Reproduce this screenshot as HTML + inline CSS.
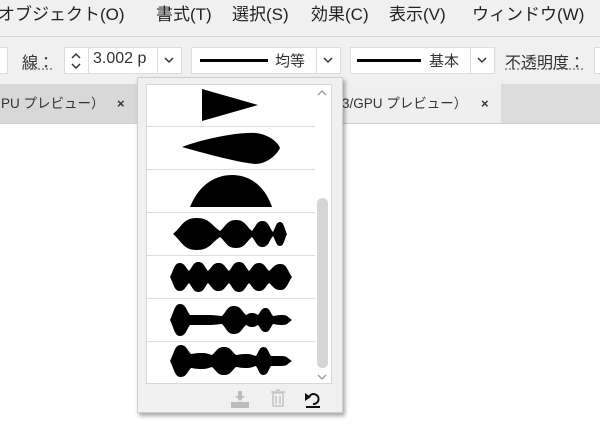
<!DOCTYPE html><html><head><meta charset="utf-8"><style>
body{margin:0;width:600px;height:444px;overflow:hidden;background:#fff;font-family:"Liberation Sans","Noto Sans CJK JP",sans-serif;position:relative}
.a{position:absolute}
.menu{left:0;top:0;width:600px;height:36px;background:#f0f0f0;border-bottom:1px solid #d4d4d4;font-size:17px;color:#222;line-height:30px}
.tb{left:0;top:37px;width:600px;height:47px;background:#f0f0f0}
.box{background:#fff;border:1px solid #dcdcdc;box-sizing:border-box;height:27px;top:10px}
.lbl{font-size:16px;color:#333;top:14px;text-decoration:underline dotted #888}
.tabs{left:0;top:84px;width:600px;height:39px;background:#dcdcdc;border-bottom:1px solid #cfcfcf}
.tab{font-size:13.5px;color:#333;line-height:39px}
</style></head><body>
<div class="a menu"><span class="a" style="left:-2px;top:0">オブジェクト(O)</span><span class="a" style="left:156px">書式(T)</span><span class="a" style="left:232px">選択(S)</span><span class="a" style="left:311px">効果(C)</span><span class="a" style="left:389px">表示(V)</span><span class="a" style="left:472px">ウィンドウ(W)</span></div>
<div class="a tb">
<div class="a box" style="left:-2px;width:10px"></div>
<span class="a lbl" style="left:22px;top:12px">線：</span>
<div class="a box" style="left:64px;width:94px"></div>
<div class="a" style="left:88px;top:10px;width:1px;height:27px;background:#dcdcdc"></div>
<svg class="a" style="left:69px;top:14px" width="14" height="20"><path d="M3,7 L7,3 L11,7 M3,13 L7,17 L11,13" stroke="#333" stroke-width="1.5" fill="none"/></svg>
<span class="a" style="left:93px;top:13px;font-size:16px;color:#333">3.002 p</span>
<div class="a box" style="left:157px;width:25px"></div>
<svg class="a" style="left:164px;top:19px" width="10" height="8"><path d="M1,2 L5,6 L9,2" stroke="#333" stroke-width="1.5" fill="none"/></svg>
<div class="a box" style="left:191px;width:126px"></div>
<div class="a" style="left:200px;top:22px;width:68px;height:3px;background:#000"></div>
<span class="a" style="left:275px;top:13px;font-size:15px;color:#333">均等</span>
<div class="a box" style="left:316px;width:25px"></div>
<svg class="a" style="left:323px;top:19px" width="10" height="8"><path d="M1,2 L5,6 L9,2" stroke="#333" stroke-width="1.5" fill="none"/></svg>
<div class="a box" style="left:350px;width:121px"></div>
<div class="a" style="left:357px;top:22px;width:64px;height:3px;background:#000"></div>
<span class="a" style="left:429px;top:13px;font-size:15px;color:#333">基本</span>
<div class="a box" style="left:470px;width:25px"></div>
<svg class="a" style="left:477px;top:19px" width="10" height="8"><path d="M1,2 L5,6 L9,2" stroke="#333" stroke-width="1.5" fill="none"/></svg>
<span class="a lbl" style="left:505px;top:12px">不透明度：</span>
<div class="a box" style="left:594px;width:20px"></div>
</div>
<div class="a tabs">
<div class="a tab" style="left:0;top:0;width:136px;height:39px;background:#d8d8d8"><span style="margin-left:1px">PU プレビュー）</span><span class="a" style="left:117px;font-weight:bold;font-size:13px">×</span></div>
<div class="a tab" style="left:336px;top:0;width:165px;height:39px;background:#efefef"><span style="margin-left:6px">3/GPU プレビュー）</span><span class="a" style="left:145px;font-weight:bold;font-size:13px">×</span></div>
</div>
<div class="a" style="left:137px;top:77px;width:206px;height:336px;background:#f0f0f0;border:1px solid #cfcfcf;box-sizing:border-box;box-shadow:2px 3px 4px rgba(0,0,0,.35)"></div>
<div class="a" style="left:146px;top:84px;width:186px;height:300px;background:#fff;border:1px solid #d8d8d8;box-sizing:border-box"></div>
<div class="a" style="left:317px;top:198px;width:11px;height:170px;background:#d6d6d6;border-radius:5px"></div>
<svg class="a" style="left:0;top:0" width="600" height="444">
<g stroke="#ddd" stroke-width="1"><path d="M147,126.5H315M147,169.5H315M147,212.5H315M147,255.5H315M147,298.5H315M147,341.5H315"/></g>
<path d="M318,95 L322,91 L326,95 M318,375 L322,379 L326,375" stroke="#999" stroke-width="1.3" fill="none"/>
<path d="M202,89 L258,105 L202,121 Z"/>
<path d="M182,147 C200,140 235,132 255,133 C268,134 278,142 280,148 C276,156 266,164 255,164 C235,162 200,152 182,147 Z"/>
<path d="M190,207 C200,182 218,175 232,175 C250,175 265,186 272,207 Z"/>
<g id="w"></g>
<g fill="#bbb"><path d="M238,391h4v5h3l-5,5l-5,-5h3z"/><rect x="231" y="402" width="18" height="6"/></g>
<g fill="none" stroke="#c4c4c4" stroke-width="1.5"><rect x="273" y="393" width="10" height="13"/><path d="M271,392h14M276,390h4M276,396v8M280,396v8"/></g>
<g fill="none" stroke="#111" stroke-width="2"><path d="M309,397 A5,5 0 1 1 313,404 M306,407h14"/></g><path d="M305,393 L311,397 L305,401Z" fill="#111"/>
</svg>
<script>
function wave(c,L){var t='',b='';var x=L[0][0];t='M'+x+','+c;var pts=[];
for(var i=0;i<L.length;i++){var l=L[i],x0=l[0],x1=l[1],h=l[2],n0=i==0?0:L[i-1][3],n1=i==L.length-1?0:l[3],m=(x0+x1)/2,d=(x1-x0)/2;
pts.push([x0,n0,m,h,x1,n1,d]);}
pts.forEach(function(p){t+=' C'+(p[0]+p[6]*.4)+','+(c-p[1]-(p[3]-p[1])*.5)+' '+(p[2]-p[6]*.55)+','+(c-p[3])+' '+p[2]+','+(c-p[3])+' C'+(p[2]+p[6]*.55)+','+(c-p[3])+' '+(p[4]-p[6]*.4)+','+(c-p[5]-(p[3]-p[5])*.5)+' '+p[4]+','+(c-p[5]);});
for(var j=pts.length-1;j>=0;j--){var p=pts[j];b+=' C'+(p[4]-p[6]*.4)+','+(c+p[5]+(p[3]-p[5])*.5)+' '+(p[2]+p[6]*.55)+','+(c+p[3])+' '+p[2]+','+(c+p[3])+' C'+(p[2]-p[6]*.55)+','+(c+p[3])+' '+(p[0]+p[6]*.4)+','+(c+p[1]+(p[3]-p[1])*.5)+' '+p[0]+','+(c+p[1]);}
return '<path d="'+t+b+' Z"/>';}
var g='';
g+=wave(234,[[173,220,16,3],[220,252,14,3],[252,273,13,2],[273,287,12,0]]);
g+=wave(277,[[170,189,14,6],[189,208,15,6],[208,229,14,6],[229,249,15,6],[249,269,14,6],[269,292,13,0]]);
g+=wave(320,[[170,190,16,5],[190,222,5,4],[222,246,14,5],[246,258,7,5],[258,273,12,4],[273,292,5,0]]);
g+=wave(361,[[170,191,16,7],[191,212,8,6],[212,236,14,6],[236,256,7,5],[256,271,14,5],[271,292,5,0]]);
document.getElementById('w').innerHTML=g;
</script>
</body></html>
